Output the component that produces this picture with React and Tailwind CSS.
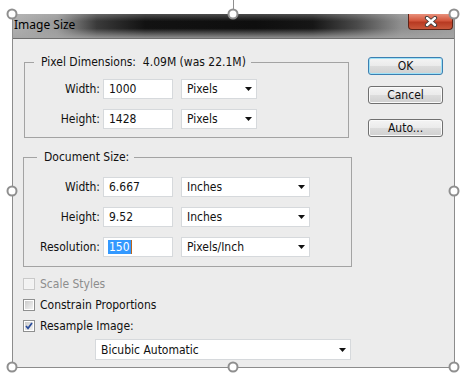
// Photoshop "Image Size" dialog, shown selected on a white canvas
import React from 'react';

const uiFont = "font-[family-name:'DejaVu_Sans_Condensed','Liberation_Sans',sans-serif]";

// ============================================================================
// SMALL PIECES
// ============================================================================
function Handle({ className }) {
  return (
    <div
      className={`absolute w-[11px] h-[11px] rounded-full bg-white border-2 border-[#8f8f8f] -translate-x-1/2 -translate-y-1/2 ${className}`}
    />
  );
}

function Arrow() {
  return (
    <svg width="7" height="4" viewBox="0 0 7 4" className="shrink-0">
      <path d="M0 0 H7 L3.5 4 Z" fill="#111" />
    </svg>
  );
}

function Field({ value, selected }) {
  return (
    <div className="h-[20px] w-[70px] border border-[#d6d9dc] bg-white pl-[5px] flex items-center text-[12px] text-[#111]">
      {selected ? (
        <>
          <span className="bg-[#3399ff] text-white leading-[14px] px-[1px] -ml-[1px]">{value}</span>
          <span className="w-[1px] h-[14px] bg-[#b8651f]" />
        </>
      ) : (
        value
      )}
    </div>
  );
}

function Select({ value, width }) {
  return (
    <div
      className={`h-[20px] ${width} border border-[#d6d9dc] bg-white pl-[5px] pr-[4px] flex items-center justify-between text-[12px] text-[#111]`}
    >
      <span>{value}</span>
      <Arrow />
    </div>
  );
}

function Row({ label, labelWidth, value, unit, unitWidth, selected }) {
  return (
    <div className="flex items-center h-[20px]">
      <div className={`${labelWidth} text-right text-[12px] text-[#111]`}>{label}</div>
      <div className="ml-[3px]">
        <Field value={value} selected={selected} />
      </div>
      <div className="ml-[8px]">
        <Select value={unit} width={unitWidth} />
      </div>
    </div>
  );
}

function Group({ title, titleLeft, className, children }) {
  return (
    <div className={`relative border border-[#a3a3a3] ${className}`}>
      <span
        className={`absolute -top-[8px] ${titleLeft} bg-[#ececec] pl-[7px] pr-[5px] leading-[14px] text-[12px] text-[#111] whitespace-pre`}
      >
        {title}
      </span>
      {children}
    </div>
  );
}

function Button({ children, primary, className }) {
  return (
    <div
      className={`h-[18px] w-[75px] rounded-[3px] border flex items-center justify-center text-[12px] text-[#111] bg-[linear-gradient(to_bottom,#f4f4f4_0%,#ebebeb_48%,#dcdcdc_52%,#d0d0d0_100%)] ${
        primary
          ? 'border-[#3c7fb1] shadow-[inset_0_0_0_1px_#9fe2f7]'
          : 'border-[#707070] shadow-[inset_0_0_0_1px_#fafafa]'
      } ${className}`}
    >
      {children}
    </div>
  );
}

function Check({ label, checked, disabled }) {
  return (
    <div className="flex items-center h-[21px]">
      <div
        className={`w-[12px] h-[12px] border p-[1px] ${
          disabled ? 'border-[#c9c9c9] bg-[#f4f4f4]' : 'border-[#8e8f8f] bg-white'
        }`}
      >
        <div
          className={`w-full h-full ${
            disabled ? 'bg-[#f2f2f2]' : 'bg-[linear-gradient(135deg,#cbcbcb,#f3f3f3)]'
          }`}
        >
          {checked && (
            <svg width="8" height="8" viewBox="0 0 8 8">
              <path d="M1 4 L3 6.3 L7 1" fill="none" stroke="#2a4d9c" strokeWidth="1.7" />
            </svg>
          )}
        </div>
      </div>
      <span className={`ml-[5px] text-[12px] ${disabled ? 'text-[#8d8d8d]' : 'text-[#111]'}`}>{label}</span>
    </div>
  );
}

// ============================================================================
// TITLE BAR
// ============================================================================
function TitleBar() {
  return (
    <div className="h-[24px] flex justify-between border-b border-[#6f6f6f] box-content bg-[linear-gradient(to_bottom,rgba(190,190,190,0.35)_0%,rgba(0,0,0,0)_30%,rgba(0,0,0,0)_60%,rgba(165,165,165,0.85)_100%),linear-gradient(to_right,#b0b0b0_0%,#9a9a9a_10%,#3a3a3a_19%,#121212_30%,#0e0e0e_55%,#161616_68%,#4a4a4a_78%,#8f8f8f_88%,#9d9d9d_100%)]">
      <span className="pl-[1px] pt-[4px] text-[12px] leading-[14px] text-black font-['Segoe_UI','Noto_Sans',sans-serif]">
        Image Size
      </span>
      <div className="mr-[1px] w-[45px] h-[16px] rounded-b-[4px] border border-t-0 border-[#5e2418] bg-[linear-gradient(to_bottom,#e8907b_0%,#d2553b_45%,#b83a22_55%,#c9573a_100%)] flex items-center justify-center">
        <svg width="14" height="11" viewBox="0 0 14 11">
          <path d="M3 2 L11 9 M11 2 L3 9" stroke="#3a3a3a" strokeWidth="4.2" strokeLinecap="round" />
          <path d="M3 2 L11 9 M11 2 L3 9" stroke="#ffffff" strokeWidth="2.4" strokeLinecap="round" />
        </svg>
      </div>
    </div>
  );
}

// ============================================================================
// MAIN APP
// ============================================================================
export default function App() {
  return (
    <div className={`relative w-[465px] h-[386px] bg-white overflow-hidden pl-[12px] pt-[14px] ${uiFont}`}>
      <div className="w-[443px] h-[354px] flex flex-col border-x border-b border-[#8c8c8c]">
        <TitleBar />
        <div className="flex-1 flex bg-[#ececec]">
          {/* left column: groups and options */}
          <div className="pl-[10px] flex flex-col">
            <Group
              title="Pixel Dimensions:  4.09M (was 22.1M)"
              titleLeft="left-[9px]"
              className="mt-[23px] ml-[1px] w-[325px] h-[76px] pt-[16px] flex flex-col gap-[10px]"
            >
              <Row label="Width:" labelWidth="w-[75px]" value="1000" unit="Pixels" unitWidth="w-[76px]" />
              <Row label="Height:" labelWidth="w-[75px]" value="1428" unit="Pixels" unitWidth="w-[76px]" />
            </Group>

            <Group
              title="Document Size:"
              titleLeft="left-[13px]"
              className="mt-[19px] w-[329px] h-[110px] pt-[19px] flex flex-col gap-[10px]"
            >
              <Row label="Width:" labelWidth="w-[76px]" value="6.667" unit="Inches" unitWidth="w-[129px]" />
              <Row label="Height:" labelWidth="w-[76px]" value="9.52" unit="Inches" unitWidth="w-[129px]" />
              <Row label="Resolution:" labelWidth="w-[76px]" value="150" unit="Pixels/Inch" unitWidth="w-[129px]" selected />
            </Group>

            <div className="mt-[6px] flex flex-col">
              <Check label="Scale Styles" disabled />
              <Check label="Constrain Proportions" />
              <Check label="Resample Image:" checked />
            </div>

            <div className="mt-[3px] ml-[72px]">
              <Select value="Bicubic Automatic" width="w-[256px] h-[21px]" />
            </div>
          </div>

          {/* right column: buttons */}
          <div className="ml-auto mr-[11px] pt-[18px] flex flex-col">
            <Button primary>OK</Button>
            <Button className="mt-[11px]">Cancel</Button>
            <Button className="mt-[15px]">Auto...</Button>
          </div>
        </div>
      </div>

      {/* selection overlay: rotate line and transform handles */}
      <div className="absolute left-[233px] top-0 w-[1px] h-[9px] bg-[#8f8f8f]" />
      <Handle className="left-[12px] top-[14px]" />
      <Handle className="left-[233px] top-[14px]" />
      <Handle className="left-[454px] top-[14px]" />
      <Handle className="left-[12px] top-[191px]" />
      <Handle className="left-[454px] top-[191px]" />
      <Handle className="left-[12px] top-[367px]" />
      <Handle className="left-[233px] top-[367px]" />
      <Handle className="left-[454px] top-[367px]" />
    </div>
  );
}
